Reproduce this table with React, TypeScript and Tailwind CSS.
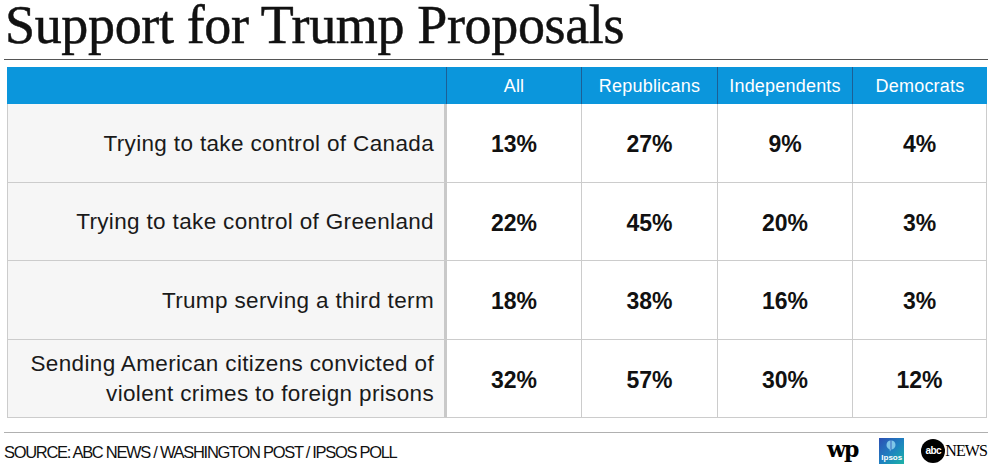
import React from "react";

const columns = ["All", "Republicans", "Independents", "Democrats"];

const rows = [
    { label: ["Trying to take control of Canada"], values: ["13%", "27%", "9%", "4%"] },
    { label: ["Trying to take control of Greenland"], values: ["22%", "45%", "20%", "3%"] },
    { label: ["Trump serving a third term"], values: ["18%", "38%", "16%", "3%"] },
    {
        label: ["Sending American citizens convicted of", "violent crimes to foreign prisons"],
        values: ["32%", "57%", "30%", "12%"],
    },
];

const sans = { fontFamily: "'Liberation Sans', Arial, sans-serif" };
const serif = { fontFamily: "'Liberation Serif', 'Times New Roman', serif" };

function IpsosLogo() {
    return (
        <div className="relative w-[25px] h-[26px] bg-gradient-to-br from-[#2b4fb3] via-[#1f7fc0] to-[#1fb3a6] flex flex-col items-center justify-end pb-[2px]">
            <svg width="10" height="12" viewBox="0 0 10 12" className="absolute top-[2px] left-[7px]">
                <path d="M5 0.5 C8 0.5 9.5 2.5 9.5 5 C9.5 7.5 7.5 9.5 5 9.5 L4 11.5 L3.5 9.2 C1.5 8.5 0.5 7 0.5 5 C0.5 2.5 2 0.5 5 0.5 Z" fill="#7fc6e8" />
                <path d="M5 0.5 L5 9.5" stroke="#2b4fb3" strokeWidth="0.8" />
            </svg>
            <span className="text-white text-[8px] font-bold leading-none" style={sans}>Ipsos</span>
        </div>
    );
}

function AbcNewsLogo() {
    return (
        <div className="flex items-center">
            <div className="w-[24px] h-[24px] rounded-full bg-black flex items-center justify-center">
                <span className="text-white text-[10px] font-bold leading-none tracking-[-0.5px]" style={sans}>abc</span>
            </div>
            <span className="text-[16px] leading-none tracking-[-0.9px] text-black" style={serif}>
                NEWS
            </span>
        </div>
    );
}

export default function App() {
    return (
        <div className="w-[992px] h-[474px] bg-white overflow-hidden px-[4px]">
            <div className="h-[60px] border-b border-[#555] flex items-start">
                <h1
                    className="text-[54px] leading-[50px] text-[#111] ml-[1px] tracking-[-0.35px] [-webkit-text-stroke:0.5px_#111]"
                    style={serif}
                >
                    Support for Trump Proposals
                </h1>
            </div>

            <div className="mx-[3px] mt-[7px] grid grid-cols-[440px_135px_136px_135px_134px]" style={sans}>
                <div className="h-[37px] bg-[#0b96dc] border-r border-[#1d5f95]" />
                {columns.map((c, i) => (
                    <div
                        key={c}
                        className={`h-[37px] bg-[#0b96dc] flex items-center justify-center text-white text-[18px] tracking-[0.2px] pt-[1px] ${i < 3 ? "border-r border-[#1d5f95]" : ""}`}
                    >
                        {c}
                    </div>
                ))}

                {rows.map((r) => (
                    <React.Fragment key={r.label[0]}>
                        <div className="h-[78.5px] bg-[#f6f6f6] border-l border-b border-[#cccccc] border-r-[3px] border-r-[#c9c9c9] flex flex-col items-end justify-center pr-[10px] pt-[2px] text-[22.5px] tracking-[0.35px] leading-[30px] text-[#1a1a1a]">
                            {r.label.map((l) => (
                                <span key={l}>{l}</span>
                            ))}
                        </div>
                        {r.values.map((v, i) => (
                            <div
                                key={i}
                                className="h-[78.5px] border-r border-b border-[#cccccc] flex items-center justify-center pt-[3px] text-[23px] font-bold text-[#111]"
                            >
                                {v}
                            </div>
                        ))}
                    </React.Fragment>
                ))}
            </div>

            <div className="mt-[14px] border-t border-[#b0b0b0] flex items-center justify-between pt-[4px]">
                <span className="text-[16.5px] tracking-[-1.3px] text-[#111] mt-[3px]" style={sans}>
                    SOURCE: ABC NEWS / WASHINGTON POST / IPSOS POLL
                </span>
                <div className="flex items-center pr-[1px]">
                    <span
                        className="text-[22px] font-bold leading-none tracking-[-2px] text-black mt-[-4px]"
                        style={{ fontFamily: "'DejaVu Serif', 'Liberation Serif', serif" }}
                    >
                        wp
                    </span>
                    <div className="ml-[22px] mr-[17px]">
                        <IpsosLogo />
                    </div>
                    <AbcNewsLogo />
                </div>
            </div>
        </div>
    );
}
